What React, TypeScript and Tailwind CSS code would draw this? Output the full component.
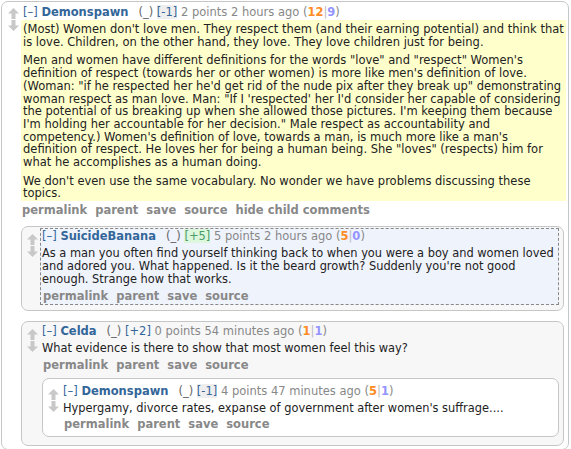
import React from "react";

function Arrows() {
  return (
    <div className="flex w-[15px] shrink-0 flex-col items-center gap-[1px] pt-[6px]">
      <svg width="11" height="11" viewBox="0 0 11 11">
        <path d="M5.5 0 L11 5.5 L7.5 5.5 L7.5 11 L3.5 11 L3.5 5.5 L0 5.5 Z" fill="#c8c8c8" />
      </svg>
      <svg width="11" height="11" viewBox="0 0 11 11">
        <path d="M5.5 11 L11 5.5 L7.5 5.5 L7.5 0 L3.5 0 L3.5 5.5 L0 5.5 Z" fill="#c8c8c8" />
      </svg>
    </div>
  );
}

type TagProps = {
  author: string;
  flair: string;
  flairClass: string;
  points: string;
  ago: string;
  up: string;
  down: string;
};

function Tagline({ author, flair, flairClass, points, ago, up, down }: TagProps) {
  return (
    <p className="whitespace-nowrap text-[11.5px] leading-[15px] text-[#888]">
      <span className="text-[#369]">[–]</span>{" "}
      <span className="font-bold text-[#369]">{author}</span>
      <span className="ml-[10px] text-[#666]">(_)</span>{" "}
      <span className={flairClass}>{flair}</span> {points} points {ago} (
      <span className="font-bold text-[#ff8b24]">{up}</span>
      <span className="text-[#bbb]">|</span>
      <span className="font-bold text-[#9494ff]">{down}</span>)
    </p>
  );
}

function Buttons({ hide }: { hide?: boolean }) {
  const items = ["permalink", "parent", "save", "source"];
  if (hide) items.push("hide child comments");
  return (
    <ul className="flex gap-[8px] whitespace-nowrap pl-[1px] text-[11.5px] font-bold leading-[15px] text-[#888]">
      {items.map((i) => (
        <li key={i}>{i}</li>
      ))}
    </ul>
  );
}

export default function App() {
  return (
    <div className="h-[449px] overflow-hidden bg-white font-['DejaVu_Sans','Verdana',sans-serif] text-[11.4px] text-[#222]">
      <div className="ml-[1px] mr-[2px] mt-[1px] flex rounded-[7px] border border-[#c6c6c6] bg-white pl-[4px] pr-[2px]">
        <Arrows />
        <div className="min-w-0 flex-1 pt-[3px]">
          <div className="pl-[2px]">
            <Tagline
              author="Demonspawn"
              flair="[-1]"
              flairClass="bg-[#eeeeee] text-[#369]"
              points="2"
              ago="2 hours ago"
              up="12"
              down="9"
            />
          </div>
          <div className="bg-[#ffffcc] px-[2px] pb-[1px] pt-[3px] text-[11.5px] leading-[12.7px] text-[#222]">
            <p>
              (Most) Women don't love men. They respect them (and their earning potential) and think that is love. Children, on the other hand, they love. They love children just for being.
            </p>
            <p className="mt-[6px]">
              Men and women have different definitions for the words "love" and "respect" Women's definition of respect (towards her or other women) is more like men's definition of love. (Woman: "if he respected her he'd get rid of the nude pix after they break up" demonstrating woman respect as man love. Man: "If I 'respected' her I'd consider her capable of considering the potential of us breaking up when she allowed those pictures. I'm keeping them because I'm holding her accountable for her decision." Male respect as accountability and competency.) Women's definition of love, towards a man, is much more like a man's definition of respect. He loves her for being a human being. She "loves" (respects) him for what he accomplishes as a human doing.
            </p>
            <p className="mt-[6px]">
              We don't even use the same vocabulary. No wonder we have problems discussing these topics.
            </p>
          </div>
          <div className="mt-[2px]">
            <Buttons hide />
          </div>

          <div className="mt-[8px] mr-[2px] flex rounded-[7px] border border-[#c6c6c6] bg-[#f7f7f8] pb-[5px] pl-[3px] pr-[4px] pt-[1px]">
            <Arrows />
            <div className="min-w-0 flex-1 border border-dashed border-[#888] bg-[#eff3fc] pl-[1px]">
              <Tagline
                author="SuicideBanana"
                flair="[+5]"
                flairClass="bg-[#ddf7dd] text-[#4a9a6a]"
                points="5"
                ago="2 hours ago"
                up="5"
                down="0"
              />
              <p className="mt-[3px] leading-[12.9px] text-[#222]">
                As a man you often find yourself thinking back to when you were a boy and women loved and adored you. What happened. Is it the beard growth? Suddenly you're not good enough. Strange how that works.
              </p>
              <div className="mt-[3px]">
                <Buttons />
              </div>
            </div>
          </div>

          <div className="mb-[3px] mr-[2px] mt-[10px] flex rounded-[7px] border border-[#c6c6c6] bg-[#f7f7f8] pb-[8px] pl-[3px] pr-[4px] pt-[1px]">
            <Arrows />
            <div className="min-w-0 flex-1 pl-[2px] pt-[1px]">
              <Tagline
                author="Celda"
                flair="[+2]"
                flairClass="text-[#369]"
                points="0"
                ago="54 minutes ago"
                up="1"
                down="1"
              />
              <p className="mt-[3px] leading-[12.7px] text-[#222]">
                What evidence is there to show that most women feel this way?
              </p>
              <div className="mt-[3px]">
                <Buttons />
              </div>
              <div className="mt-[5px] flex rounded-[7px] border border-[#c6c6c6] bg-white pb-[4px] pl-[3px] pr-[5px] pt-[4px]">
                <Arrows />
                <div className="min-w-0 flex-1 pl-[2px] pt-[1px]">
                  <Tagline
                    author="Demonspawn"
                    flair="[-1]"
                    flairClass="bg-[#eeeeee] text-[#369]"
                    points="4"
                    ago="47 minutes ago"
                    up="5"
                    down="1"
                  />
                  <p className="mt-[3px] leading-[12.7px] text-[#222]">
                    Hypergamy, divorce rates, expanse of government after women's suffrage....
                  </p>
                  <div className="mt-[3px]">
                    <Buttons />
                  </div>
                </div>
              </div>
            </div>
          </div>
        </div>
      </div>
    </div>
  );
}
